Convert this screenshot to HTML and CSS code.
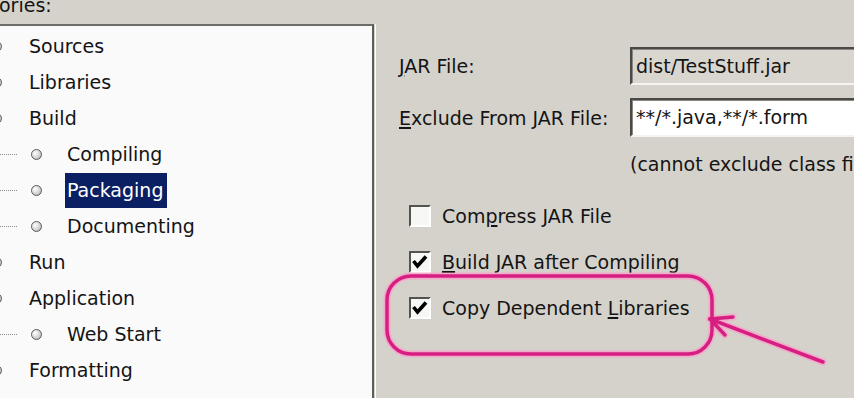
FILE: index.html
```html
<!DOCTYPE html>
<html>
<head>
<meta charset="utf-8">
<link rel="stylesheet" href="styles.css">
</head>
<body>
<div class="page">
  <div class="top"><span class="caption">ories:</span></div>
  <div class="main">
    <div class="tree-wrap">
      <div class="tree">
        <div class="row top-level"><span class="dot"></span><span class="label">Sources</span></div>
        <div class="row top-level"><span class="dot"></span><span class="label">Libraries</span></div>
        <div class="row top-level"><span class="dot"></span><span class="label">Build</span></div>
        <div class="row child"><span class="dots"></span><span class="dot"></span><span class="label">Compiling</span></div>
        <div class="row child"><span class="dots"></span><span class="dot"></span><span class="label selected">Packaging</span></div>
        <div class="row child"><span class="dots"></span><span class="dot"></span><span class="label">Documenting</span></div>
        <div class="row top-level"><span class="dot"></span><span class="label">Run</span></div>
        <div class="row top-level"><span class="dot"></span><span class="label">Application</span></div>
        <div class="row child"><span class="dots"></span><span class="dot"></span><span class="label">Web Start</span></div>
        <div class="row top-level"><span class="dot"></span><span class="label">Formatting</span></div>
      </div>
    </div>
    <div class="panel">
      <div class="form">
        <span class="flabel"><u>J</u>AR File:</span>
        <div class="field readonly">dist/TestStuff.jar</div>
        <span class="flabel"><u>E</u>xclude From JAR File:</span>
        <div class="field tall">**/*.java,**/*.form</div>
        <span></span>
        <div class="note">(cannot exclude class files)</div>
      </div>
      <div class="checks">
        <div class="check"><span class="box"></span><span>Com<u>p</u>ress JAR File</span></div>
        <div class="check"><span class="box checked"><svg viewBox="0 0 22 22" width="22" height="22"><polyline points="4.5,10 8.5,15 17,5.5" fill="none" stroke="#000" stroke-width="3.6"/></svg></span><span><u>B</u>uild JAR after Compiling</span></div>
        <div class="check"><span class="box checked"><svg viewBox="0 0 22 22" width="22" height="22"><polyline points="4.5,10 8.5,15 17,5.5" fill="none" stroke="#000" stroke-width="3.6"/></svg></span><span>Copy Dependent <u>L</u>ibraries</span></div>
      </div>
    </div>
  </div>
  <svg class="annot" width="854" height="398" viewBox="0 0 854 398">
    <g fill="none" stroke-linecap="round" stroke-linejoin="round">
      <g stroke="#f7a3cc" stroke-width="7" opacity="0.8">
        <rect x="387" y="276" width="325" height="78" rx="24"/>
        <line x1="710" y1="319" x2="823" y2="362"/>
        <line x1="710" y1="319" x2="733" y2="317"/>
        <line x1="710" y1="319" x2="725" y2="335"/>
      </g>
      <g stroke="#d61f80" stroke-width="3.5">
        <rect x="387" y="276" width="325" height="78" rx="24"/>
        <line x1="710" y1="319" x2="823" y2="362"/>
        <line x1="710" y1="319" x2="733" y2="317"/>
        <line x1="710" y1="319" x2="725" y2="335"/>
      </g>
    </g>
  </svg>
</div>
</body>
</html>
```

FILE: styles.css
```css
html, body {
  margin: 0;
  padding: 0;
}
body {
  background: #d5d2cb;
  font-family: "DejaVu Sans", sans-serif;
  font-size: 19px;
  color: #141414;
  overflow: hidden;
  width: 854px;
  height: 398px;
}
.page {
  position: relative;
  width: 854px;
  height: 398px;
  overflow: hidden;
}
.top {
  height: 24px;
  overflow: hidden;
}
.caption {
  display: block;
  line-height: 22px;
  margin-top: -6px;
  margin-left: -1px;
  white-space: nowrap;
}
.main {
  display: flex;
  height: 374px;
}
.tree-wrap {
  width: 378px;
  flex: none;
  display: flex;
}
.tree {
  width: 372px;
  background: #fafafa;
  border-top: 2px solid #6e6c68;
  border-right: 2px solid #5f5d59;
  box-shadow: 1px 0 0 #d5d2cb, 2px 0 0 #ffffff;
  padding-top: 2px;
  overflow: hidden;
}
.row {
  height: 36px;
  display: flex;
  align-items: center;
  white-space: nowrap;
}
.dot {
  width: 11px;
  height: 11px;
  box-sizing: border-box;
  border-radius: 50%;
  border: 1px solid #5a5a5a;
  background: radial-gradient(circle at 35% 35%, #ffffff 0%, #dcdcdc 45%, #a8a8a8 100%);
  flex: none;
}
.top-level .dot {
  margin-left: -9px;
}
.top-level .label {
  margin-left: 27px;
}
.dots {
  width: 17px;
  height: 0;
  border-top: 1px dotted #8a8a8a;
  flex: none;
  margin-top: 1px;
}
.child .dot {
  margin-left: 14px;
}
.child .label {
  margin-left: 23px;
  padding: 0 4px 0 2px;
  height: 35px;
  line-height: 35px;
}
.label.selected {
  background: #0b1f63;
  color: #ffffff;
}
.panel {
  flex: 1;
  padding: 23px 0 0 21px;
  white-space: nowrap;
}
.form {
  display: grid;
  grid-template-columns: 231px 240px;
  row-gap: 13px;
  align-items: center;
}
.flabel {
  line-height: 24px;
}
u {
  text-decoration-thickness: 2px;
  text-underline-offset: 2px;
}
.field {
  height: 38px;
  box-sizing: border-box;
  border-top: 2px solid #4a4946;
  border-left: 2px solid #4a4946;
  border-bottom: 2px solid #f4f3f0;
  border-right: 2px solid #f4f3f0;
  box-shadow: inset 1px 1px 0 #8a8884;
  padding-left: 4px;
  line-height: 34px;
  background: #ffffff;
  width: 260px;
}
.field.readonly {
  background: #d9d6d0;
}
.field.tall {
  height: 39px;
  line-height: 35px;
}
.note {
  line-height: 24px;
  margin-top: 2px;
}
.checks {
  margin-top: 17px;
  display: flex;
  flex-direction: column;
}
.check {
  height: 46px;
  display: flex;
  align-items: center;
  gap: 11px;
  padding-left: 10px;
}
.box {
  width: 22px;
  height: 22px;
  box-sizing: border-box;
  border-top: 2px solid #55534f;
  border-left: 2px solid #55534f;
  border-bottom: 2px solid #ffffff;
  border-right: 2px solid #ffffff;
  background: #f7f7f5;
  flex: none;
  position: relative;
  overflow: hidden;
}
.box svg {
  display: block;
  margin: -2px 0 0 -2px;
}
.annot {
  position: absolute;
  left: 0;
  top: 0;
  pointer-events: none;
}
```
